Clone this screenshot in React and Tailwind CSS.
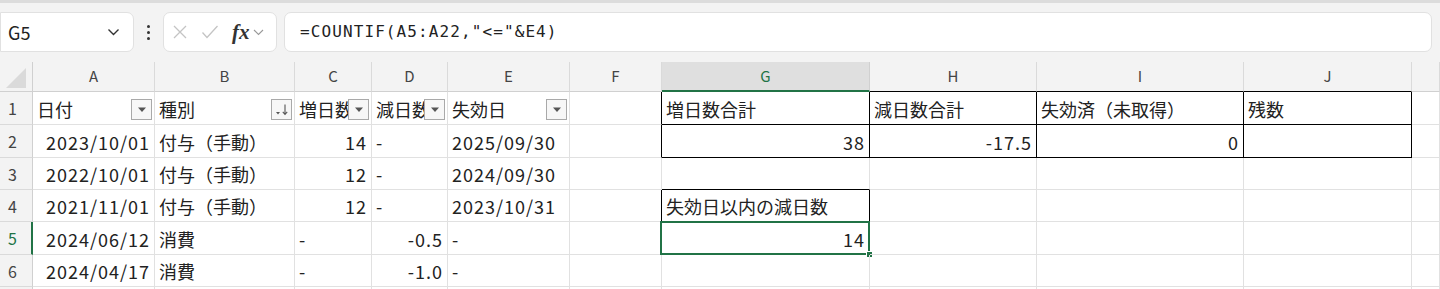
import React from 'react';

const FONT = { fontFamily: '"Noto Sans CJK JP", "Noto Sans", sans-serif' };

const cols = ['A', 'B', 'C', 'D', 'E', 'F', 'G', 'H', 'I', 'J', ''];

// left / right aligned cells, keyed by row then column
const rows = [
  {
    h: 'h-[33px]',
    cells: {
      A: { t: '日付', f: 'down' },
      B: { t: '種別', f: 'sort' },
      C: { t: '増日数', f: 'down' },
      D: { t: '減日数', f: 'down' },
      E: { t: '失効日', f: 'down' },
      G: { t: '増日数合計' },
      H: { t: '減日数合計' },
      I: { t: '失効済（未取得）' },
      J: { t: '残数' },
    },
  },
  {
    h: 'h-[33px]',
    cells: {
      A: { t: '2023/10/01', r: true },
      B: { t: '付与（手動）' },
      C: { t: '14', r: true },
      D: { t: '-' },
      E: { t: '2025/09/30' },
      G: { t: '38', r: true },
      H: { t: '-17.5', r: true },
      I: { t: '0', r: true },
    },
  },
  {
    h: 'h-[32px]',
    cells: {
      A: { t: '2022/10/01', r: true },
      B: { t: '付与（手動）' },
      C: { t: '12', r: true },
      D: { t: '-' },
      E: { t: '2024/09/30' },
    },
  },
  {
    h: 'h-[32px]',
    cells: {
      A: { t: '2021/11/01', r: true },
      B: { t: '付与（手動）' },
      C: { t: '12', r: true },
      D: { t: '-' },
      E: { t: '2023/10/31' },
      G: { t: '失効日以内の減日数' },
    },
  },
  {
    h: 'h-[33px]',
    cells: {
      A: { t: '2024/06/12', r: true },
      B: { t: '消費' },
      C: { t: '-' },
      D: { t: '-0.5', r: true },
      E: { t: '-' },
      G: { t: '14', r: true, sel: true },
    },
  },
  {
    h: 'h-[32px]',
    cells: {
      A: { t: '2024/04/17', r: true },
      B: { t: '消費' },
      C: { t: '-' },
      D: { t: '-1.0', r: true },
      E: { t: '-' },
    },
  },
  { h: 'h-[32px]', cells: {}, blank: true },
];

// cells that carry a thin black border on every side
const boxed = new Set(['G1', 'H1', 'I1', 'J1', 'G2', 'H2', 'I2', 'J2', 'G4']);
const isBoxed = (c, r) => boxed.has(`${c}${r}`);
const isNumeric = (t) => /^[\d/.-]+$/.test(t || '');

const FilterButton = ({ kind }) => (
  <div className="absolute right-[2px] top-[7px] w-[21px] h-[21px] border border-[#a9a9a9] bg-[#f7f7f7] flex items-center justify-center">
    {kind === 'sort' ? (
      <svg width="15" height="13" viewBox="0 0 15 13">
        <path d="M2 9h4l-2 2.5z" fill="#555" />
        <path d="M11 1.5v10M8.8 8.8l2.2 2.7 2.2-2.7" stroke="#555" strokeWidth="1.1" fill="none" />
      </svg>
    ) : (
      <svg width="12" height="7" viewBox="0 0 12 7">
        <path d="M2 1.5h8l-4 4.5z" fill="#555" />
      </svg>
    )}
  </div>
);

const TopBar = () => (
  <div className="h-[62px] bg-[#f3f3f3] border-t-[3px] border-[#dcdcdc] flex items-start pt-[9px]">
    <div className="w-[134px] h-[40px] bg-white border border-[#e1e1e1] rounded-r-[7px] flex items-center justify-between pl-[7px] pr-[13px]">
      <span className="text-[18px] text-[#222]" style={FONT}>G5</span>
      <svg width="13" height="8" viewBox="0 0 13 8">
        <path d="M1.5 1.5l5 5 5-5" stroke="#333" strokeWidth="1.4" fill="none" />
      </svg>
    </div>
    <div className="w-[29px] h-[40px] flex flex-col items-center justify-center gap-[3px]">
      <span className="w-[3px] h-[3px] rounded-full bg-[#333]" />
      <span className="w-[3px] h-[3px] rounded-full bg-[#333]" />
      <span className="w-[3px] h-[3px] rounded-full bg-[#333]" />
    </div>
    <div className="w-[114px] h-[40px] bg-white border border-[#e1e1e1] rounded-[7px] flex items-center pl-[8px] gap-[13px]">
      <svg width="16" height="16" viewBox="0 0 16 16">
        <path d="M2 2l12 12M14 2L2 14" stroke="#c4c4c4" strokeWidth="1.3" fill="none" />
      </svg>
      <svg width="18" height="16" viewBox="0 0 18 16">
        <path d="M1.5 8.5l4.5 5L16.5 2" stroke="#c4c4c4" strokeWidth="1.3" fill="none" />
      </svg>
      <div className="flex items-center gap-[3px]">
        <span className="italic font-bold text-[21px] text-[#333] leading-none" style={{ fontFamily: '"Liberation Serif", serif' }}>fx</span>
        <svg width="11" height="7" viewBox="0 0 11 7">
          <path d="M1 1l4.5 4.5L10 1" stroke="#999" strokeWidth="1.1" fill="none" />
        </svg>
      </div>
    </div>
    <div className="flex-1 h-[40px] ml-[7px] mr-[8px] bg-white border border-[#e1e1e1] rounded-[7px] flex items-center pl-[15px]">
      <span className="text-[16px] text-[#222] tracking-[1.1px]" style={{ fontFamily: '"DejaVu Sans Mono", monospace' }}>
        =COUNTIF(A5:A22,"&lt;="&amp;E4)
      </span>
    </div>
  </div>
);

const App = () => {
  return (
    <div className="w-[1440px] h-[289px] overflow-hidden bg-white" style={FONT}>
      <TopBar />
      <div className="grid grid-cols-[33px_122px_140px_77px_76px_122px_92px_208px_167px_207px_168px_1fr]">
        {/* column headers */}
        <div className="h-[30px] bg-[#f3f3f3] border-r border-b border-[#d0d0d0] flex items-end justify-center pb-[2px]">
          <svg width="22" height="22" viewBox="0 0 22 22">
            <path d="M21 1V21H1z" fill="#dadada" />
          </svg>
        </div>
        {cols.map((c, i) =>
          c === 'G' ? (
            <div key={i} className="h-[30px] bg-[#dfdfdf] border-r border-[#d0d0d0] border-b-2 border-b-[#217346] flex items-center justify-center text-[15px] text-[#217346]">
              {c}
            </div>
          ) : (
            <div
              key={i}
              className={`h-[30px] bg-[#f3f3f3] border-r border-[#dadada] border-b flex items-center justify-center text-[15px] text-[#444] ${
                isBoxed(c, 1) ? 'border-b-black' : 'border-b-[#d0d0d0]'
              }`}
            >
              {c}
            </div>
          )
        )}

        {rows.map((row, ri) => {
          const r = ri + 1;
          return (
            <React.Fragment key={r}>
              <div
                className={`${row.h} bg-[#f3f3f3] border-b border-[#dadada] flex items-center pl-[8px] text-[16px] ${
                  r === 5 ? 'border-r-2 border-r-[#217346] text-[#217346]' : 'border-r border-r-[#d0d0d0] text-[#444]'
                }`}
              >
                {row.blank ? '' : r}
              </div>
              {cols.map((c, ci) => {
                const cell = row.cells[c] || {};
                const next = cols[ci + 1];
                const rightBlack = c && (isBoxed(c, r) || (next && isBoxed(next, r)));
                const bottomBlack = c && (isBoxed(c, r) || isBoxed(c, r + 1));
                return (
                  <div
                    key={ci}
                    className={`relative ${row.h} border-r border-b flex items-center text-[18px] text-[#222] whitespace-nowrap ${
                      cell.r ? 'justify-end pr-[4px]' : 'justify-start pl-[4px]'
                    } ${rightBlack ? 'border-r-black' : 'border-r-[#e1e1e1]'} ${
                      bottomBlack ? 'border-b-black' : 'border-b-[#e1e1e1]'
                    } ${cell.sel ? 'overflow-visible' : 'overflow-hidden'}`}
                  >
                    <span className={`pt-[2px] ${isNumeric(cell.t) ? 'tracking-[1px]' : ''}`}>{cell.t}</span>
                    {cell.f && <FilterButton kind={cell.f} />}
                    {cell.sel && (
                      <>
                        <div className="absolute -left-[2px] -top-[1px] -right-[1px] -bottom-[1px] border-2 border-[#217346]" />
                        <div className="absolute -right-[4px] -bottom-[4px] w-[7px] h-[7px] bg-[#217346] border border-white" />
                      </>
                    )}
                  </div>
                );
              })}
            </React.Fragment>
          );
        })}
      </div>
    </div>
  );
};

export default App;
